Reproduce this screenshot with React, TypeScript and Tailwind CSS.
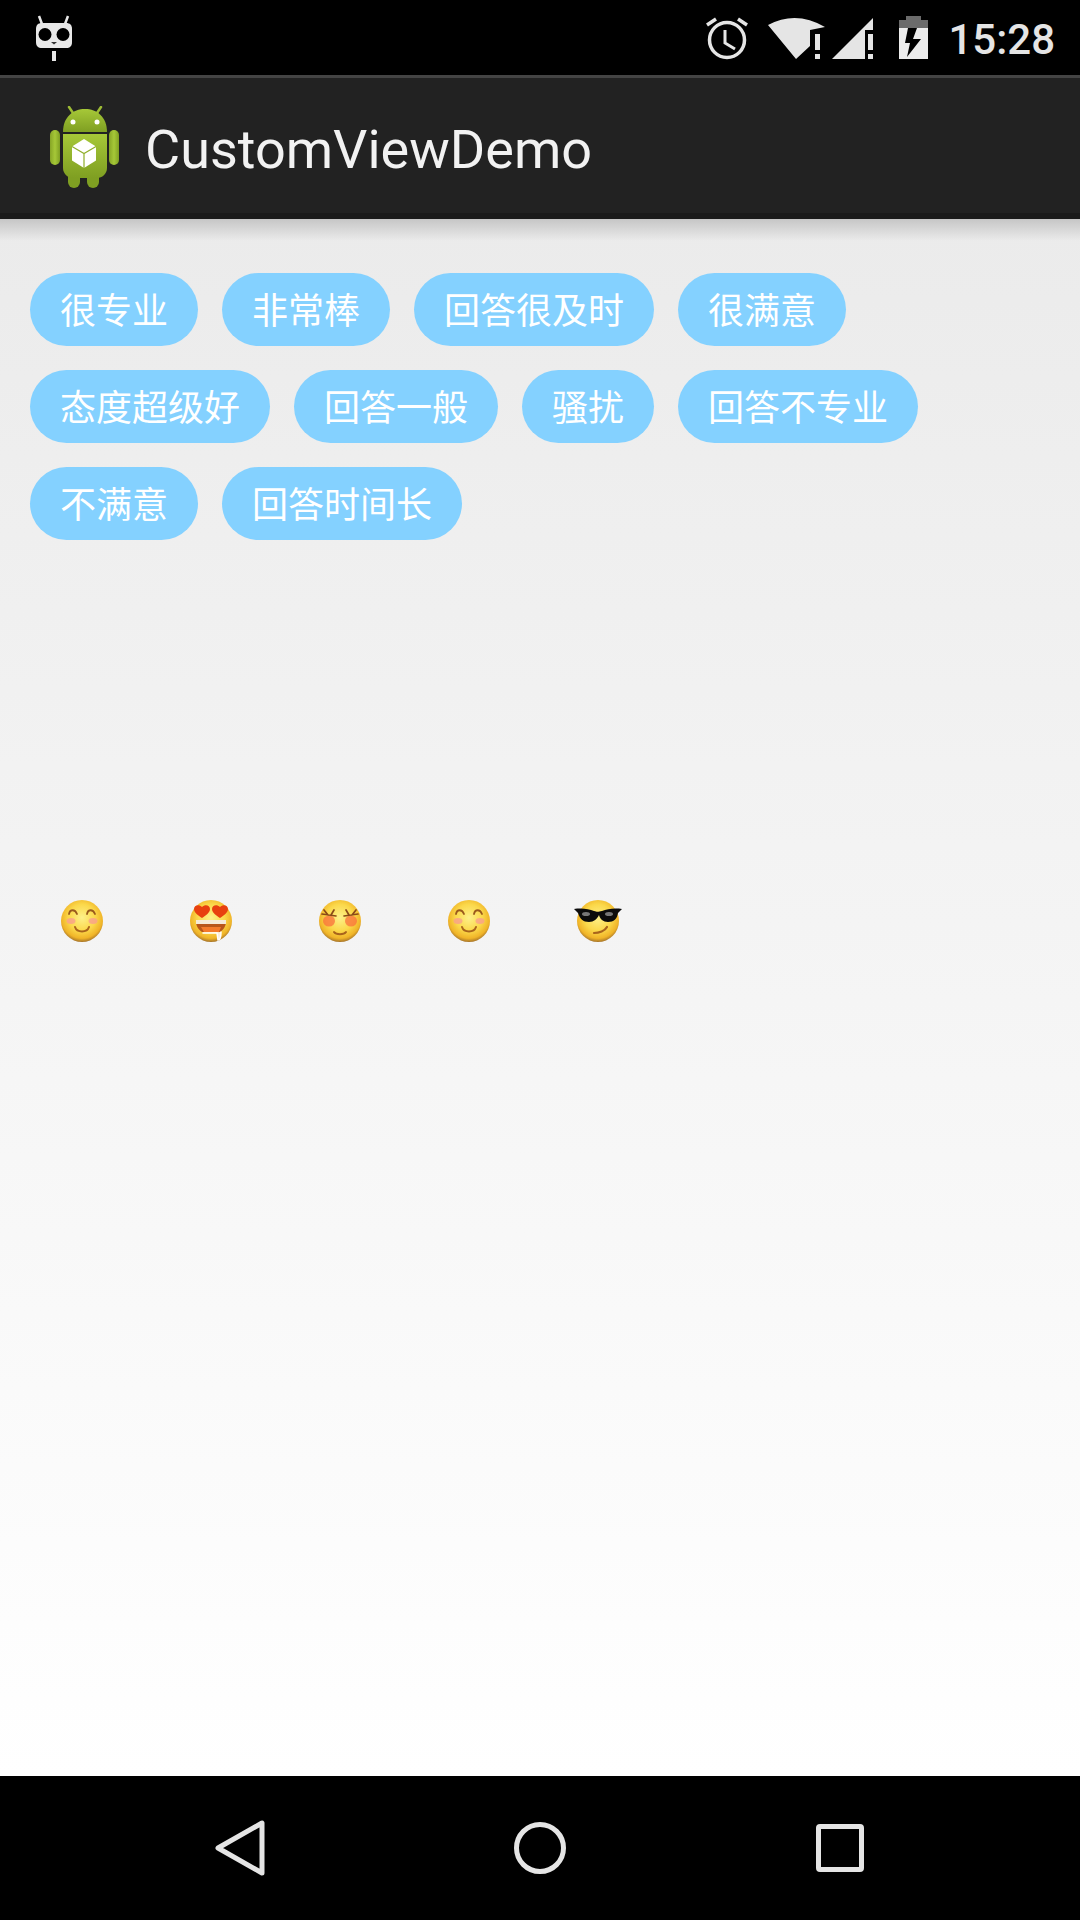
import React from 'react'

const cjk = { fontFamily: '"Noto Sans CJK SC", sans-serif' }

const tagRows = [
  '很专业', '非常棒', '回答很及时', '很满意',
  '态度超级好', '回答一般', '骚扰', '回答不专业',
  '不满意', '回答时间长',
]

// the face is shared by every emoji, only the features change
function Face({ id, children }: { id: string; children: React.ReactNode }) {
  return (
    <svg width="48" height="48" viewBox="0 0 48 48" className="blur-[0.6px]">
      <defs>
        <radialGradient id={id} cx="50%" cy="42%" r="58%">
          <stop offset="0%" stopColor="#fdf08a" />
          <stop offset="55%" stopColor="#fbd84a" />
          <stop offset="85%" stopColor="#f0b428" />
          <stop offset="100%" stopColor="#a8762a" />
        </radialGradient>
      </defs>
      <circle cx="24" cy="24" r="21" fill={`url(#${id})`} />
      {children}
    </svg>
  )
}

function Smile({ id }: { id: string }) {
  return (
    <Face id={id}>
      <ellipse cx="13" cy="24" rx="4.5" ry="3" fill="#f9a08c" opacity="0.8" />
      <ellipse cx="35" cy="24" rx="4.5" ry="3" fill="#f9a08c" opacity="0.8" />
      <path d="M11 17c1-5 6-5 8 0M29 17c1-5 6-5 8 0" fill="none" stroke="#9a5a1c" strokeWidth="1.8" strokeLinecap="round" />
      <path d="M17 30c2 6 12 6 14 0" fill="none" stroke="#a8641c" strokeWidth="2" strokeLinecap="round" />
    </Face>
  )
}

function HeartEyes() {
  return (
    <Face id="face-heart">
      <path d="M15 21c-3-2-8-5-8-9 0-4 5-5 8-2 3-3 8-2 8 2 0 4-5 7-8 9z" fill="#e8400f" />
      <path d="M33 21c-3-2-8-5-8-9 0-4 5-5 8-2 3-3 8-2 8 2 0 4-5 7-8 9z" fill="#e8400f" />
      <path d="M9 24h30c0 6-3 9-6 11H15c-3-2-6-5-6-11z" fill="#b8561a" />
      <path d="M9 23h30v4H9z" fill="#f5ead8" />
      <path d="M14 30h20l-2 5H17z" fill="#f47a2a" />
      <path d="M16 36h14l1 7c2 0 3-4 3-8" fill="#fbeedd" stroke="#fff" strokeWidth="1.5" strokeLinecap="round" />
    </Face>
  )
}

function SquintFace() {
  return (
    <Face id="face-squint">
      <ellipse cx="13" cy="24" rx="6" ry="5.5" fill="#f9703c" opacity="0.75" />
      <ellipse cx="35" cy="24" rx="6" ry="5.5" fill="#f9703c" opacity="0.75" />
      <path d="M6 17l14 2M8 13l4 5M18 13l-3 5" fill="none" stroke="#8a4a18" strokeWidth="1.7" strokeLinecap="round" />
      <path d="M42 17l-14 2M40 13l-4 5M30 13l3 5" fill="none" stroke="#8a4a18" strokeWidth="1.7" strokeLinecap="round" />
      <path d="M18 35c2 3 10 3 12 0" fill="none" stroke="#a8641c" strokeWidth="2" strokeLinecap="round" />
    </Face>
  )
}

function CoolFace() {
  return (
    <Face id="face-cool">
      <path d="M0 12c8-1 15 0 20 2 3 1 4 1 8 0 5-2 12-3 20-2l-4 4c-1 6-4 9-10 9-5 0-8-3-9-7-2 4-5 7-10 7-6 0-9-3-11-9z" fill="#0c0c0c" />
      <ellipse cx="12" cy="17" rx="4" ry="2" fill="#777" />
      <ellipse cx="35" cy="17" rx="4" ry="2" fill="#777" />
      <path d="M20 36c5 0 11-2 13-6" fill="none" stroke="#a8641c" strokeWidth="2.2" strokeLinecap="round" />
    </Face>
  )
}

function StatusIcons() {
  return (
    <div className="flex items-center">
      {/* alarm */}
      <svg width="42" height="44" viewBox="0 0 42 44" fill="none" stroke="#e5e5e5" className="mr-[20px]">
        <circle cx="21" cy="24" r="17.5" strokeWidth="3.5" />
        <path d="M19 14v13l10 6" strokeWidth="3" />
        <path d="M1 9l9-6M41 9l-9-6" strokeWidth="3.5" />
      </svg>
      {/* wifi */}
      <svg width="58" height="44" viewBox="0 0 58 44" fill="#e5e5e5" className="mr-[6px]">
        <path d="M0 9Q28-6 57 11L42 14V30L28 43z" />
        <rect x="47" y="18" width="5" height="16" />
        <rect x="47" y="38" width="5" height="5" />
      </svg>
      {/* cell */}
      <svg width="41" height="44" viewBox="0 0 41 44" fill="#e5e5e5" className="mr-[26px]">
        <path d="M0 43L41 2V14H33V43z" />
        <rect x="36" y="18" width="5" height="16" />
        <rect x="36" y="38" width="5" height="5" />
      </svg>
      {/* battery charging */}
      <svg width="29" height="44" viewBox="0 0 29 44" className="mr-[20px]">
        <path d="M7 0h15v4h7v39H0V4h7z" fill="#ececec" />
        <path d="M7 0h15v4h7v8H0V4h7z" fill="#6b6b6b" />
        <path d="M9 12h9l-4 11h8L8 41l3-14H6z" fill="#000" />
      </svg>
      <span className="text-[42px] leading-none font-medium mt-[5px] text-[#e5e5e5] font-['Roboto',sans-serif]">15:28</span>
    </div>
  )
}

function CidMascot() {
  return (
    <svg width="36" height="46" viewBox="0 0 36 46">
      <path d="M3 1l3 8M32 1l-3 8" stroke="#e8e8e8" strokeWidth="2.5" />
      <path d="M6 8h24c4 0 6 2 6 6v13c0 4-2 6-6 6H6c-4 0-6-2-6-6V14c0-4 2-6 6-6z" fill="#e8e8e8" />
      <circle cx="9" cy="19.5" r="6.5" fill="#000" />
      <circle cx="27" cy="19.5" r="6.5" fill="#000" />
      <path d="M15 27h6l-3 2.5z" fill="#333" />
      <rect x="16" y="36" width="4" height="10" fill="#e8e8e8" />
    </svg>
  )
}

function AndroidLogo() {
  return (
    <svg width="69" height="82" viewBox="0 0 69 82" className="mt-[3px] shrink-0">
      <defs>
        <linearGradient id="droid" x1="0" y1="0" x2="0" y2="1">
          <stop offset="0%" stopColor="#a6c838" />
          <stop offset="100%" stopColor="#7f9f22" />
        </linearGradient>
        <linearGradient id="droid-arm" x1="0" y1="0" x2="1" y2="0">
          <stop offset="0%" stopColor="#86a526" />
          <stop offset="50%" stopColor="#a6c838" />
          <stop offset="100%" stopColor="#7f9f22" />
        </linearGradient>
      </defs>
      <path d="M19 1l4 6M51 1l-4 6" stroke="#9dbb35" strokeWidth="2.5" strokeLinecap="round" />
      <path d="M13 26C13 11 23 3 35 3S57 11 57 26z" fill="url(#droid)" />
      <circle cx="23" cy="16" r="2.5" fill="#fff" />
      <circle cx="47" cy="16" r="2.5" fill="#fff" />
      <rect x="0" y="24" width="10" height="35" rx="5" fill="url(#droid-arm)" />
      <rect x="59" y="24" width="10" height="35" rx="5" fill="url(#droid-arm)" />
      <rect x="18" y="62" width="12" height="20" rx="6" fill="#7f9f22" />
      <rect x="37" y="62" width="12" height="20" rx="6" fill="#7f9f22" />
      <path d="M13 28H57V62C57 68 52 72 47 72H23C18 72 13 68 13 62z" fill="url(#droid)" />
      <path d="M34 33L46 40.6V54.6L34 62 22 54.6V40.6z" fill="#fff" />
      <path d="M22 40.6L34 47.6 46 40.6M34 47.6V62" fill="none" stroke="#8fae2a" strokeWidth="1.2" />
    </svg>
  )
}

export default function App() {
  return (
    <div className="w-[1080px] h-[1920px] flex flex-col bg-white overflow-hidden">
      <div className="h-[75px] bg-black flex items-center justify-between pl-[36px] pr-[25px] shrink-0">
        <CidMascot />
        <StatusIcons />
      </div>

      <div className="h-[144px] shrink-0 bg-[#222222] border-t-[3px] border-b-[6px] border-t-[#444444] border-b-[#1b1b1b] flex items-center pl-[50px]">
        <AndroidLogo />
        <h1 className="ml-[26px] mt-[7px] text-[54px] text-[#f2f2f2] font-['Roboto',sans-serif]">CustomViewDemo</h1>
      </div>

      <div className="relative flex-1 bg-gradient-to-b from-[#ebebeb] to-white">
        <div className="absolute top-0 inset-x-0 h-[22px] bg-gradient-to-b from-[#c6c6c6] to-transparent" />

        <div className="relative flex flex-wrap gap-6 pt-[54px] px-[30px] w-[960px]" style={cjk}>
          {tagRows.map((tag) => (
            <span key={tag} className="h-[73px] px-[30px] pb-[4px] rounded-full bg-[#84d1ff] text-white text-[36px] flex items-center">
              {tag}
            </span>
          ))}
        </div>

        <div className="flex pl-[58px] mt-[357px]">
          <div className="w-[129px] h-[48px]"><Smile id="face-a" /></div>
          <div className="w-[129px] h-[48px]"><HeartEyes /></div>
          <div className="w-[129px] h-[48px]"><SquintFace /></div>
          <div className="w-[129px] h-[48px]"><Smile id="face-b" /></div>
          <div className="w-[129px] h-[48px]"><CoolFace /></div>
        </div>
      </div>

      <div className="h-[144px] shrink-0 bg-black">
        <div className="flex h-full items-center">
          <svg width="50" height="56" viewBox="0 0 50 56" className="ml-[215px]" fill="none" stroke="#e5e5e5" strokeWidth="5" strokeLinejoin="round">
            <path d="M47 3v50L3 28z" />
          </svg>
          <svg width="52" height="52" viewBox="0 0 52 52" className="ml-[249px]" fill="none" stroke="#e5e5e5" strokeWidth="5">
            <circle cx="26" cy="26" r="23.5" />
          </svg>
          <div className="ml-[250px] w-[48px] h-[48px] border-[5px] border-[#e5e5e5] rounded-[4px]" />
        </div>
      </div>
    </div>
  )
}
